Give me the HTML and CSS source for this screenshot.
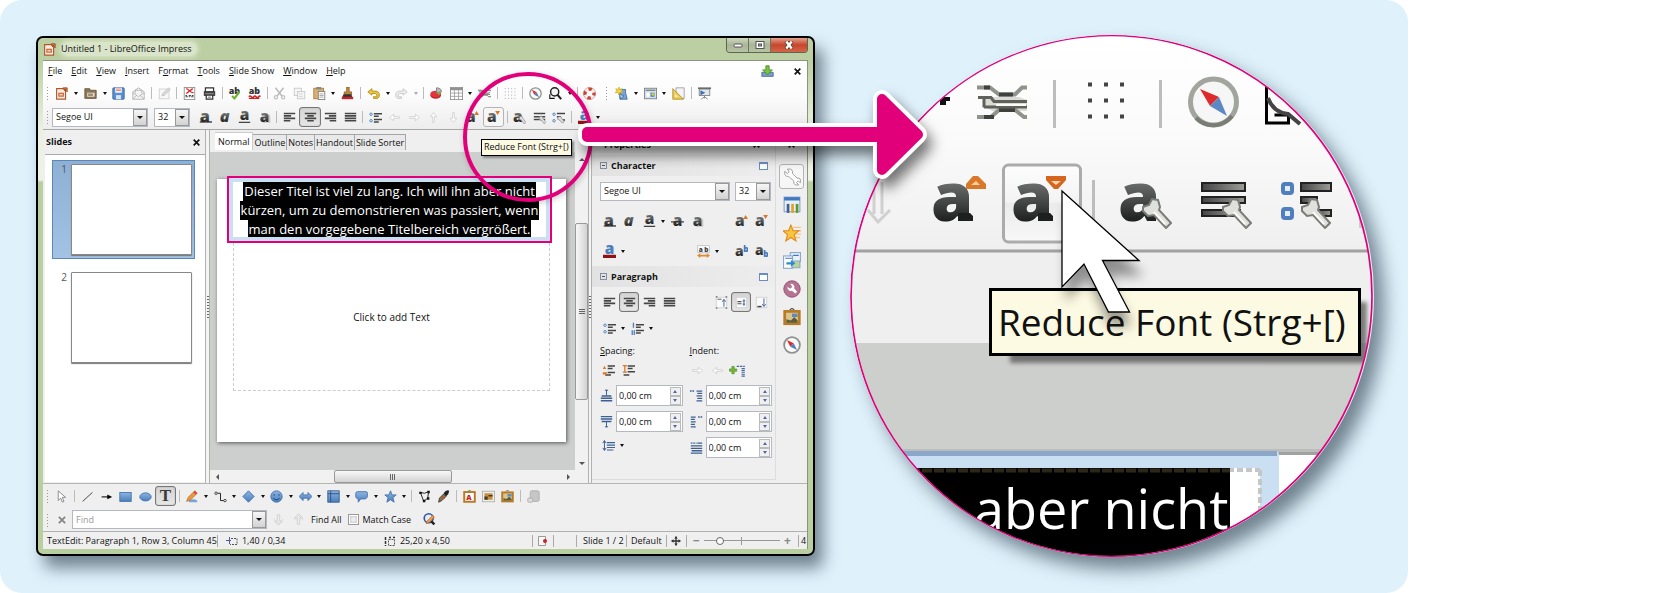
FILE: index.html
```html
<!DOCTYPE html>
<html lang="en">
<head>
<meta charset="utf-8">
<title>LibreOffice Impress: Reduce Font</title>
<link rel="stylesheet" href="styles.css">
</head>
<body>
<svg class="defs" aria-hidden="true">
<defs>
<linearGradient id="gA" x1="0" y1="0" x2="0" y2="1"><stop offset=".2" stop-color="#8a8d8a"/><stop offset=".8" stop-color="#1c1e1e"/></linearGradient>
<linearGradient id="gB" x1="0" y1="0" x2="0" y2="1"><stop offset="0" stop-color="#8db4e2"/><stop offset="1" stop-color="#4a7ebb"/></linearGradient>
<linearGradient id="gBar" x1="0" y1="0" x2="1" y2="0"><stop offset="0" stop-color="#444"/><stop offset="1" stop-color="#9b9d97"/></linearGradient>
</defs>
<symbol id="doc" viewBox="0 0 16 16"><path d="M2 2h8l3 3v10H2z" fill="#fbeee6" stroke="#b1572c" stroke-width="1.4"/><rect x="4" y="7" width="7" height="5" fill="#c96c3c"/><path d="M5.500 8.500h4v2h-4z" fill="#f4d0b8"/><path d="M10 1h5v5zM11 5l3-3" fill="#d07a48" stroke="#a04a20"/></symbol>
<symbol id="folder" viewBox="0 0 16 16"><path d="M1 2h6l1 2h7v10H1z" fill="#8a7458" stroke="#6a563c"/><path d="M4 7h9v5H4z" fill="#e8e2d8"/><path d="M5 8h6v3H5z" fill="#9a8a70"/></symbol>
<symbol id="save" viewBox="0 0 16 16"><rect x="1" y="1" width="14" height="14" rx="1" fill="#5a8fd0" stroke="#2f5f9f"/><path d="M4 1h8v6H4z" fill="#fff"/><path d="M5 2.500h6M5 4.500h6" stroke="#d45a4a"/><path d="M5 10h6v5H5z" fill="#dce6f2"/></symbol>
<symbol id="mail" viewBox="0 0 16 16"><path d="M1 6l7-5 7 5v9H1z" fill="#f4f4f4" stroke="#aaa"/><path d="M1 7l7 5 7-5M1 15l5-5M15 15l-5-5M4 8V4h8v4" fill="none" stroke="#b0b0b0"/></symbol>
<symbol id="edit" viewBox="0 0 16 16"><rect x="1.500" y="2.500" width="12" height="12" fill="#f8f8f8" stroke="#ccc"/><path d="M5 11l1-3 7-7 2 2-7 7z" fill="#ddd" stroke="#bbb"/></symbol>
<symbol id="pdf" viewBox="0 0 16 16"><rect x="1.500" y=".5" width="13" height="15" fill="#fff" stroke="#888"/><path d="M4 2c4 1 4 5 9 5M12 2L4 8" fill="none" stroke="#d22" stroke-width="1.600"/><path d="M3 12h3M7 12h2M10 12h3M3 10.500h2M7 10.500h3M11 10.500h2" fill="none" stroke="#444" stroke-width="1.200"/></symbol>
<symbol id="print" viewBox="0 0 16 16"><path d="M3 1h10v5H3z" fill="#fff" stroke="#333" stroke-width="1.500"/><path d="M1 5h14v6H1z" fill="#444"/><path d="M3 8.500h10" stroke="#ccc"/><path d="M4 10h8v5H4z" fill="#fff" stroke="#333" stroke-width="1.500"/><path d="M6 12.500h4" stroke="#555"/></symbol>
<symbol id="cut" viewBox="0 0 16 16"><path d="M3 1l8 10M13 1L5 11" stroke="#b8b8b8" stroke-width="1.800"/><g fill="none" stroke="#c0c0c0" stroke-width="1.500"><circle cx="3.500" cy="12.500" r="2"/><circle cx="12.500" cy="12.500" r="2"/></g></symbol>
<symbol id="copy" viewBox="0 0 16 16"><g fill="#f6f6f6" stroke="#c4c4c4"><rect x="1.500" y="1.500" width="9" height="9"/><rect x="5.500" y="5.500" width="9" height="9"/></g><path d="M7 8.500h5M7 11.500h5" stroke="#ccc"/></symbol>
<symbol id="paste" viewBox="0 0 16 16"><rect x="1" y="1.500" width="12" height="13" fill="#d9b072" stroke="#a87832"/><rect x="4" y="0" width="6" height="3" fill="#888"/><rect x="6.500" y="5.500" width="8" height="10" fill="#fff" stroke="#777"/><path d="M8 8.500h5M8 10.500h5M8 12.500h5" stroke="#999"/></symbol>
<symbol id="brush" viewBox="0 0 16 16"><path d="M7 0h3v6h3v3H4V6h3z" fill="#c88a3c" stroke="#8a5a20"/><path d="M3 9h10l1 5H1z" fill="#333"/><path d="M1 12h14v3H1z" fill="#c9222c"/></symbol>
<symbol id="undo" viewBox="0 0 16 16"><path d="M6 2L1 6l5 4V8h4q3 0 2 4H8v2h5q3-1 2-6-1-3-5-3H6z" fill="#f0c93c" stroke="#a98410"/></symbol>
<symbol id="redo" viewBox="0 0 16 16"><path d="M10 2l5 4-5 4V8H6q-3 0-2 4h4v2H3Q0 13 1 8q1-3 5-3h4z" fill="#eee" stroke="#c4c4c4"/></symbol>
<symbol id="chart" viewBox="0 0 16 16"><ellipse cx="7" cy="10" rx="6.500" ry="4.500" fill="#c8202a"/><ellipse cx="7" cy="8.500" rx="6.500" ry="4" fill="#e2353c"/><path d="M8 7V1q6 0 6 5z" fill="#bbb" stroke="#777"/><path d="M8 7l6-1-3 4z" fill="#7db53c"/></symbol>
<symbol id="table" viewBox="0 0 16 16"><rect x=".5" y=".5" width="15" height="15" fill="#fff" stroke="#888"/><path d="M0 1h16v3H0z" fill="#8f928f"/><path d="M0 7.500h16M0 11.500h16M5.500 4v12M10.500 4v12" stroke="#999"/></symbol>
<symbol id="zig" viewBox="0 0 16 10"><path d="M0 1h5l2 2h3l2-2h4M0 9h5l2-2h4l2 2h3M1 3h5v3h9M2 5v3M6 4.500h7l2-1.500" fill="none" stroke="#6c706c" stroke-width="1.200"/></symbol>
<symbol id="grid" viewBox="0 0 16 16"><path d="M1 2h14M1 6h14M1 10h14M1 14h14" stroke="#8a8a8a" stroke-width="1" stroke-dasharray="1 3"/></symbol>
<symbol id="compass" viewBox="0 0 16 16"><circle cx="8" cy="8" r="7" fill="#fafafa" stroke="#8e918c" stroke-width="1.600"/><path d="M3.500 3.500l6 3-3 3z" fill="#dc2a2a"/><path d="M12.500 12.500l-6-3 3-3z" fill="#5580bd"/></symbol>
<symbol id="find" viewBox="0 0 16 16"><path d="M1 9V14h6" fill="none" stroke="#111" stroke-width="1.300"/><circle cx="7" cy="6" r="5" fill="#f4f4f4" stroke="#222" stroke-width="1.800"/><path d="M10 9l5 6" stroke="#222" stroke-width="2.600"/></symbol>
<symbol id="buoy" viewBox="0 0 16 16"><circle cx="8" cy="8" r="5.500" fill="none" stroke="#eee" stroke-width="4"/><circle cx="8" cy="8" r="5.500" fill="none" stroke="#d6402e" stroke-width="4" stroke-dasharray="4.300 4.340" stroke-dashoffset="2"/><circle cx="8" cy="8" r="7.500" fill="none" stroke="#b66" stroke-width=".6"/></symbol>
<symbol id="newslide" viewBox="0 0 16 16"><path d="M6 3h7v4l2 8H6z" fill="#7ba4d6" stroke="#39669c"/><path d="M5 8l6 3-4 4z" fill="#a9c8ea" stroke="#39669c"/><path d="M5 0l1 3 3-1-1 3 2 2-4 0-1 3-1-3-4 0 2-2-1-3 3 1z" fill="#f6d33c" stroke="#b8920c" stroke-width=".6"/></symbol>
<symbol id="layout" viewBox="0 0 16 16"><rect x=".5" y="1.500" width="15" height="13" fill="#cfe0f2" stroke="#777"/><path d="M2 4h12" stroke="#777" stroke-width="1.500"/><path d="M3 7h4v5H3z" fill="#fff"/><path d="M8 7h5v5H8z" fill="#4a7ebb"/><circle cx="11" cy="9" r="2" fill="#c8c83c"/></symbol>
<symbol id="ruler" viewBox="0 0 16 16"><path d="M5 1h10v13H5z" fill="#f4f4f4" stroke="#999"/><path d="M1 2v13h13z" fill="#f1cf57" stroke="#a98420"/><path d="M4 9v3h3z" fill="#fff"/></symbol>
<symbol id="present" viewBox="0 0 16 16"><path d="M0 1.500h16" stroke="#666" stroke-width="2"/><rect x="1.500" y="2.500" width="13" height="8" fill="#dfe6ec" stroke="#777"/><path d="M3 4l6 3-6 3z" fill="#3f6fb0"/><path d="M8 11v3M4 15l4-3 4 3" fill="none" stroke="#777"/></symbol>
<symbol id="a-wr" viewBox="0 0 16 16"><path d="M8 7q4-2 4 2l4 5-2 2-4-5q-3 0-2-2z" fill="#ddd" stroke="#888" stroke-width=".8"/></symbol>
<symbol id="al-l" viewBox="0 0 16 16"><path d="M1 3h14M1 6h9M1 9h14M1 12h8" stroke="#444744" stroke-width="2"/></symbol>
<symbol id="al-c" viewBox="0 0 16 16"><path d="M1 3h14M4 6h8M1 9h14M4 12h8" stroke="#444744" stroke-width="2"/></symbol>
<symbol id="al-r" viewBox="0 0 16 16"><path d="M1 3h14M6 6h9M1 9h14M7 12h8" stroke="#444744" stroke-width="2"/></symbol>
<symbol id="al-j" viewBox="0 0 16 16"><path d="M1 3h14M1 6h14M1 9h14M1 12h14" stroke="#444744" stroke-width="2"/></symbol>
<symbol id="bul" viewBox="0 0 16 16"><g fill="#fff" stroke="#4a7ebb" stroke-width="1.200"><circle cx="2.500" cy="4" r="1.500"/><circle cx="2.500" cy="12" r="1.500"/></g><path d="M6 3.500h10M6 6.500h6M6 10.500h10M6 13.500h6" stroke="#444744" stroke-width="1.800"/></symbol>
<symbol id="num" viewBox="0 0 16 16"><path d="M3 1v6M1.500 10v6M4 10v6" stroke="#4a7ebb" stroke-width="1.600"/><path d="M6 3.500h10M6 6.500h6M6 10.500h10M6 13.500h6" stroke="#444744" stroke-width="1.800"/></symbol>
<symbol id="ar-l" viewBox="0 0 16 16"><path d="M2 8l5-4v3h7v2H7v3z" fill="#fff" stroke="#ccc"/></symbol>
<symbol id="ar-r" viewBox="0 0 16 16"><path d="M14 8L9 4v3H2v2h7v3z" fill="#fff" stroke="#ccc"/></symbol>
<symbol id="ar-u" viewBox="0 0 16 16"><path d="M8 2L4 7h3v7h2V7h3z" fill="#fff" stroke="#ccc"/></symbol>
<symbol id="ar-d" viewBox="0 0 16 16"><path d="M8 14l4-5H9V2H7v7H4z" fill="#fff" stroke="#ccc"/></symbol>
<symbol id="ln-w" viewBox="0 0 16 16"><path d="M1 3h14M1 7h14M1 10.500h14" stroke="#444744" stroke-width="2"/><path d="M8 7q4-2 4 2l4 5-2 2-4-5q-3 0-2-2z" fill="#ddd" stroke="#888" stroke-width=".8"/></symbol>
<symbol id="bul-w" viewBox="0 0 16 16"><g fill="#fff" stroke="#4a7ebb" stroke-width="1.200"><circle cx="2.500" cy="4" r="1.500"/><circle cx="2.500" cy="12" r="1.500"/></g><path d="M6 3h10M6 7h5M12 11h4" stroke="#444744" stroke-width="2"/><path d="M7 8q4-3 5 1l3 4-2 2-4-4q-3 0-2-3z" fill="#ddd" stroke="#777" stroke-width=".8"/></symbol>
<symbol id="v-t" viewBox="0 0 16 16"><rect x="1.500" y="1.500" width="13" height="13" fill="#fafafa" stroke="#ccc"/><path d="M1 1h2M13 1h2M1 15h2M13 15h2M3 4h5" stroke="#666" stroke-width="1.400"/><path d="M11 13V5M9 7l2-3 2 3" fill="none" stroke="#46659a" stroke-width="1.200"/></symbol>
<symbol id="v-m" viewBox="0 0 16 16"><rect x="1.500" y="1.500" width="13" height="13" fill="#fafafa" stroke="#ccc"/><path d="M3 7h5M3 9.500h5" stroke="#555" stroke-width="1.400"/><path d="M11 4v8M9.500 6h3M9.500 10h3" fill="none" stroke="#46659a" stroke-width="1.200"/></symbol>
<symbol id="v-b" viewBox="0 0 16 16"><rect x="1.500" y="1.500" width="13" height="13" fill="#fafafa" stroke="#ccc"/><path d="M3 13h5" stroke="#444" stroke-width="1.800"/><path d="M11 3v9M9 10l2 3 2-3" fill="none" stroke="#46659a" stroke-width="1.200"/></symbol>
<symbol id="sp-i" viewBox="0 0 16 16"><path d="M7 2.500h9M7 5.500h6M7 10.500h9M4 13.500h7" stroke="#444" stroke-width="1.800"/><path d="M1 6l2-4 2 4zM1 10h5v3H1z" fill="#dd7722"/></symbol>
<symbol id="sp-d" viewBox="0 0 16 16"><path d="M7 2.500h9M7 5.500h6M7 9.500h9M2 13.500h7" stroke="#444" stroke-width="1.800"/><path d="M1 2h5M3.500 2v8M1 10h5" stroke="#dd7722" stroke-width="1.600"/></symbol>
<symbol id="in-h" viewBox="0 0 20 16"><path d="M0 6h3V3h3v3h3v3H6v3H3V9H0z" fill="#73b53c" stroke="#4c8a1c" stroke-width=".7"/><path d="M9 3h10" stroke="#46659a" stroke-width="1.400" stroke-dasharray="3 1"/><path d="M17 5v11" stroke="#46659a" stroke-width="4" stroke-dasharray="1.500 1"/></symbol>
<symbol id="f-top" viewBox="0 0 16 16"><path d="M8 1v7M6 1.500h4" stroke="#3d5f94" stroke-width="1.200"/><path d="M2 8.500h12M1 11.500h14M1 14.500h14" stroke="#3d5f94" stroke-width="1.800"/></symbol>
<symbol id="f-bot" viewBox="0 0 16 16"><path d="M8 8v7M6 14.500h4" stroke="#3d5f94" stroke-width="1.200"/><path d="M1 2h14M1 5h14M2 8h12" stroke="#3d5f94" stroke-width="1.800"/></symbol>
<symbol id="f-l" viewBox="0 0 16 16"><path d="M0 2.500h6" stroke="#3d5f94" stroke-width="1.800" stroke-dasharray="2 1"/><path d="M8 2.500h7M9 5.500h6M8 8.500h7M9 11.500h6M8 14.500h7" stroke="#3d5f94" stroke-width="1.600"/></symbol>
<symbol id="f-r" viewBox="0 0 16 16"><path d="M10 2.500h6" stroke="#3d5f94" stroke-width="1.800" stroke-dasharray="2 1"/><path d="M1 2.500h6M1 5.500h5M1 8.500h6M1 11.500h5M1 14.500h6" stroke="#3d5f94" stroke-width="1.600"/></symbol>
<symbol id="f-f" viewBox="0 0 16 16"><path d="M1 2.500h7" stroke="#3d5f94" stroke-width="1.600" stroke-dasharray="2 1"/><path d="M9 2.500h6M1 6h14M1 9h14M2 12h13M1 15h14" stroke="#3d5f94" stroke-width="1.600"/></symbol>
<symbol id="f-ls" viewBox="0 0 16 16"><path d="M3 2v12M1 5l2-3 2 3M1 11l2 3 2-3" fill="none" stroke="#3d5f94" stroke-width="1.200"/><path d="M6 4.500h10M6 7.500h10M6 10.500h10M6 13.500h8" stroke="#3d5f94" stroke-width="1.400"/></symbol>
<symbol id="sel" viewBox="0 0 16 16"><path d="M4 1v12l3-3 2 5 2-1-2-5h4z" fill="#fff" stroke="#777"/></symbol>
<symbol id="line" viewBox="0 0 16 16"><path d="M2 14L14 3" stroke="#222"/></symbol>
<symbol id="arw" viewBox="0 0 16 16"><path d="M2 8.500h8" stroke="#111" stroke-width="1.400"/><path d="M9 5.500l6 3-6 3z"/></symbol>
<symbol id="rect" viewBox="0 0 16 16"><rect x="1" y="3" width="14" height="11" fill="url(#gB)" stroke="#3d6ca8"/></symbol>
<symbol id="ell" viewBox="0 0 16 16"><ellipse cx="8" cy="8.500" rx="7" ry="5" fill="url(#gB)" stroke="#3d6ca8"/></symbol>
<symbol id="pencil" viewBox="0 0 16 16"><path d="M5 13q5-3 10 0v2H5z" fill="#7ba4d6"/><path d="M2 14l2-5 8-8 3 3-8 8z" fill="#ee9a3c" stroke="#a85c18" stroke-width=".8"/><path d="M12 1l3 3-2 1.500L10.500 3z" fill="#d44"/></symbol>
<symbol id="conn" viewBox="0 0 16 16"><path d="M2 4h6v9h5" fill="none" stroke="#222" stroke-width="1.200"/><g fill="#fff" stroke="#222"><circle cx="2.500" cy="4" r="1.500"/><circle cx="13.500" cy="13" r="1.500"/></g></symbol>
<symbol id="dia" viewBox="0 0 16 16"><path d="M8 1l7 7-7 7-7-7z" fill="url(#gB)" stroke="#3d6ca8"/></symbol>
<symbol id="smile" viewBox="0 0 16 16"><circle cx="8" cy="8" r="7" fill="url(#gB)" stroke="#3d6ca8"/><path d="M5 5v2M11 5v2M4 10q4 4 8 0" fill="none" stroke="#234a7c" stroke-width="1.200"/></symbol>
<symbol id="lr" viewBox="0 0 16 16"><path d="M0 8l5-5v3h6V3l5 5-5 5v-3H5v3z" fill="url(#gB)" stroke="#3d6ca8"/></symbol>
<symbol id="flow" viewBox="0 0 16 16"><rect x="1" y="1" width="14" height="14" fill="url(#gB)" stroke="#2f5588"/><path d="M1 4.500h14M4.500 1v14" stroke="#234a7c"/></symbol>
<symbol id="bub" viewBox="0 0 16 16"><path d="M3 2h11q2 0 1 7-1 2-3 2H7l-3 4v-4Q0 11 1 4q0-2 2-2z" fill="url(#gB)" stroke="#3d6ca8"/></symbol>
<symbol id="star" viewBox="0 0 16 16"><path d="M8 1l2 5h5l-4 3.500L12.500 15 8 12l-4.500 3L5 9.500 1 6h5z" fill="url(#gB)" stroke="#3d6ca8"/></symbol>
<symbol id="poly" viewBox="0 0 16 16"><path d="M3 3l5 1 5-2-1 8-5 4z" fill="none" stroke="#222" stroke-width="1.200"/><g fill="#111"><path d="M1.500 2h3v3h-3zM11.500 1h3v3h-3zM11 9h3v3h-3zM6 12h3v3H6z"/></g></symbol>
<symbol id="drop" viewBox="0 0 16 16"><path d="M2 15l1-5 5-5 3 3-5 5z" fill="#8a7440" stroke="#333"/><path d="M8 4q4-5 7-3-0 4-4 7z" fill="#222"/><path d="M6 8l3 3" stroke="#d2452a" stroke-width="1.500"/></symbol>
<symbol id="fw" viewBox="0 0 16 16"><path d="M6 2l2-2 2 2" fill="none" stroke="#555"/><rect x="1.500" y="2.500" width="13" height="12" fill="#fff" stroke="#b97a24" stroke-width="2.400"/></symbol>
<symbol id="pic" viewBox="0 0 16 16"><rect x=".5" y="1.500" width="15" height="13" fill="#eee" stroke="#aaa"/><path d="M3 4h10v8H3z" fill="#c89038"/><path d="M3 8h4v4H3zM8 6h5v2H8z" fill="#443c2c"/></symbol>
<symbol id="gal" viewBox="0 0 16 16"><path d="M6 2l2-2 2 2" fill="none" stroke="#555"/><rect x="1.500" y="3" width="13" height="11" fill="#d8c48c" stroke="#b97a24" stroke-width="2.400"/><path d="M3 10l4 1 3-3 3 3v2H3z" fill="#5c5c3c"/><path d="M8 5h5v3H8z" fill="#5d8ac0"/></symbol>
<symbol id="extr" viewBox="0 0 16 16"><rect x="4" y="1" width="11" height="13" rx="2" fill="#c6c6c6" stroke="#aaa"/><rect x="1" y="10" width="6" height="5" rx="1" fill="#ddd" stroke="#aaa"/></symbol>
<symbol id="x" viewBox="0 0 16 16"><path d="M3 3l10 10M13 3L3 13" stroke="currentColor" stroke-width="3"/></symbol>
<symbol id="f-dn" viewBox="0 0 16 16"><path d="M8 15l5-5H9.500V2h-3v8H3z" fill="#eee" stroke="#ccc"/><path d="M2 7l6 6 6-6" fill="none" stroke="#d4d4d4"/></symbol>
<symbol id="f-up" viewBox="0 0 16 16"><path d="M8 1L3 6h3.500v8h3V6H13z" fill="#eee" stroke="#ccc"/><path d="M2 9l6-6 6 6" fill="none" stroke="#d4d4d4"/></symbol>
<symbol id="f-rep" viewBox="0 0 16 16"><circle cx="7" cy="6.500" r="5.500" fill="#e4ecf6" stroke="#34569a" stroke-width="2"/><path d="M10 10l4 4" stroke="#222" stroke-width="3"/><path d="M4 13l1-3 7-7 2 2-7 7z" fill="#f0a040" stroke="#b8501c" stroke-width=".8"/></symbol>
<symbol id="dl" viewBox="0 0 16 16"><path d="M1 9h14v5H1z" fill="#7d9cc4" stroke="#46659a"/><path d="M6 1h4v5h4l-6 6-6-6h4z" fill="#7cc243" stroke="#3c8a1c"/></symbol>
<symbol id="wrench" viewBox="0 0 16 16"><path d="M1.500 3l2.500 2 1.500-1.500L4 1q5-1 4.500 4l4 4q4-.5 3 4l-2-1.500-1.500 1.500L14 15q-5 1-4.500-3.500l-4.500-4Q1 8 1.500 3z" fill="#fcfcfc" stroke="#999" stroke-width=".8"/></symbol>
<symbol id="s-styles" viewBox="0 0 16 16"><rect x="1" y="1" width="14" height="13" fill="#e6effa" stroke="#8ba6c8"/><path d="M1 1h14v3H1z" fill="#3f78c4"/><path d="M4.500 7v8" stroke="#3f5f9a" stroke-width="2.400"/><path d="M8.500 7v8" stroke="#e6a020" stroke-width="2.400"/><path d="M12.500 7v8" stroke="#5a9a2c" stroke-width="2.400"/></symbol>
<symbol id="s-anim" viewBox="0 0 16 16"><path d="M9 3h7M11 6h5M11 9h5M10 12h5" stroke="#f2c584" stroke-width="1.200"/><path d="M7 1l2 5h5l-4 3.500L11.500 15 7 12l-4.500 3L4 9.500 0 6h5z" fill="#f9c53c" stroke="#e08a1c"/></symbol>
<symbol id="s-trans" viewBox="0 0 16 16"><rect x="6.500" y=".5" width="9" height="8" fill="#e9f1fa" stroke="#88a8cc"/><rect x=".5" y="3.500" width="8" height="11" fill="#fff" stroke="#88a8cc"/><path d="M8 8h7v6H8z" fill="#b9d49a" stroke="#88a8cc"/><path d="M2 5.500h6M9 3h5" stroke="#3f78c4"/><path d="M3 9h4V7l4 3-4 3v-2H3z" fill="#2f8ad0"/></symbol>
<symbol id="s-master" viewBox="0 0 16 16"><circle cx="8" cy="8" r="7.300" fill="#b57592" stroke="#8f5070" stroke-width=".8"/><path d="M6.500 3.500a3 3 0 0 1 3.500 4l2.500 3-1.500 1.500-3-2.500a3 3 0 0 1-4-3.500l2 1.500 1.500-.5.500-1.500z" fill="#fff"/></symbol>
</svg>

<main class="board">
<section class="window" aria-label="LibreOffice Impress">
 <header class="titlebar">
  <svg class="ic"><use href="#doc"/></svg>
  <h1>Untitled 1 - LibreOffice Impress</h1>
  <div class="winbtns">
   <button aria-label="Minimize"><svg viewBox="0 0 12 8"><rect x="2" y="3" width="8" height="3" rx="1" fill="#fff" stroke="#555"/></svg></button>
   <button aria-label="Maximize"><svg viewBox="0 0 12 8"><rect x="2" y=".5" width="8" height="7" fill="#fff" stroke="#555"/><rect x="4.500" y="3" width="3" height="2" fill="#aaa" stroke="#555"/></svg></button>
   <button class="close" aria-label="Close"><svg viewBox="0 0 12 8"><path d="M3 0l6 8M9 0L3 8" stroke="#543" stroke-width="4"/><path d="M3.300 .5l5.400 7M8.700 .5l-5.400 7" stroke="#fff" stroke-width="2.400"/></svg></button>
  </div>
 </header>
 <div class="client">
  <div class="top">
  <nav class="menubar">
   <button><u>F</u>ile</button><button><u>E</u>dit</button><button><u>V</u>iew</button><button><u>I</u>nsert</button><button>F<u>o</u>rmat</button><button><u>T</u>ools</button><button><u>S</u>lide Show</button><button><u>W</u>indow</button><button><u>H</u>elp</button>
   <span class="grow"></span>
   <button aria-label="Download update"><svg class="ic"><use href="#dl"/></svg></button>
   <button class="docclose" aria-label="Close document"><svg class="ic-s"><use href="#x"/></svg></button>
  </nav>
  <div class="toolbar tb-std">
   <i class="grip"></i>
   <button class="t" aria-label="New"><svg><use href="#doc"/></svg></button><button class="c" aria-label="New options"></button>
   <button class="t" aria-label="Open"><svg><use href="#folder"/></svg></button><button class="c" aria-label="Open options"></button>
   <button class="t" aria-label="Save"><svg><use href="#save"/></svg></button>
   <button class="t" aria-label="E-mail"><svg><use href="#mail"/></svg></button><i class="s"></i>
   <button class="t" aria-label="Edit file"><svg><use href="#edit"/></svg></button><i class="s"></i>
   <button class="t" aria-label="Export PDF"><svg><use href="#pdf"/></svg></button>
   <button class="t" aria-label="Print"><svg><use href="#print"/></svg></button><i class="s"></i>
   <button class="t" aria-label="Spelling"><svg viewBox="0 0 16 16"><text x="1" y="9" class="g-a" font-size="11" fill="#333">ab</text><path d="M5 11l3 3 6-8" fill="none" stroke="#6fb52c" stroke-width="2.600"/></svg></button>
   <button class="t" aria-label="Auto spellcheck"><svg viewBox="0 0 16 16"><text x="1" y="9" class="g-a" font-size="11" fill="#333">ab</text><path d="M1 12q1.500-2 3 0t3 0 3 0 3 0 2 0M1 14h13" fill="none" stroke="#c22" stroke-width="1.800"/></svg></button><i class="s"></i>
   <button class="t" aria-label="Cut"><svg><use href="#cut"/></svg></button>
   <button class="t" aria-label="Copy"><svg><use href="#copy"/></svg></button>
   <button class="t" aria-label="Paste"><svg><use href="#paste"/></svg></button><button class="c" aria-label="Paste options"></button>
   <button class="t" aria-label="Clone formatting"><svg><use href="#brush"/></svg></button><i class="s"></i>
   <button class="t" aria-label="Undo"><svg><use href="#undo"/></svg></button><button class="c" aria-label="Undo list"></button>
   <button class="t" aria-label="Redo"><svg><use href="#redo"/></svg></button><button class="c dim" aria-label="Redo list"></button><i class="s"></i>
   <button class="t" aria-label="Chart"><svg><use href="#chart"/></svg></button>
   <button class="t" aria-label="Table"><svg><use href="#table"/></svg></button><button class="c" aria-label="Table options"></button>
   <button class="t" aria-label="Hyperlink"><svg><use href="#zig"/></svg></button><i class="s"></i>
   <button class="t" aria-label="Grid"><svg><use href="#grid"/></svg></button><i class="s"></i>
   <button class="t" aria-label="Navigator"><svg><use href="#compass"/></svg></button>
   <button class="t" aria-label="Zoom"><svg><use href="#find"/></svg></button><button class="c" aria-label="Zoom options"></button><i class="s"></i>
   <button class="t" aria-label="Help"><svg><use href="#buoy"/></svg></button><i class="grip mid"></i>
   <button class="t" aria-label="New slide"><svg><use href="#newslide"/></svg></button><button class="c" aria-label="New slide options"></button>
   <button class="t" aria-label="Layout"><svg><use href="#layout"/></svg></button><button class="c" aria-label="Layout options"></button>
   <button class="t" aria-label="Slide design"><svg><use href="#ruler"/></svg></button><i class="s"></i>
   <button class="t" aria-label="Slide show"><svg><use href="#present"/></svg></button>
  </div>
  <div class="toolbar tb-fmt">
   <i class="grip"></i>
   <label class="combo font"><select aria-label="Font name"><option>Segoe UI</option></select><span class="dd"></span></label>
   <label class="combo size"><select aria-label="Font size"><option>32</option></select><span class="dd"></span></label>
   <button class="t" aria-label="Bold"><svg viewBox="0 0 16 16"><text x="1" y="14" class="g-a" font-size="20" fill="url(#gA)">a</text><path d="M1 13.500h15" stroke="#222" stroke-width="1.500"/></svg></button>
   <button class="t" aria-label="Italic"><svg viewBox="0 0 16 16"><text x="1" y="14" class="g-a" font-style="italic" font-size="20" fill="url(#gA)">a</text></svg></button>
   <button class="t" aria-label="Underline"><svg viewBox="0 0 16 16"><text x="2" y="11" class="g-a" font-size="19" fill="url(#gA)">a</text><path d="M1 14h14" stroke="#444" stroke-width="1.600"/></svg></button>
   <button class="t" aria-label="Shadow"><svg viewBox="0 0 16 16"><text x="2" y="14" class="g-a sh" font-size="19" fill="url(#gA)">a</text></svg></button><i class="s"></i>
   <button class="t" aria-label="Align left"><svg><use href="#al-l"/></svg></button>
   <button class="t on" aria-label="Centered"><svg><use href="#al-c"/></svg></button>
   <button class="t" aria-label="Align right"><svg><use href="#al-r"/></svg></button>
   <button class="t" aria-label="Justified"><svg><use href="#al-j"/></svg></button><i class="s"></i>
   <button class="t" aria-label="Bullets"><svg><use href="#bul"/></svg></button>
   <button class="t" aria-label="Promote"><svg><use href="#ar-l"/></svg></button>
   <button class="t" aria-label="Demote"><svg><use href="#ar-r"/></svg></button>
   <button class="t" aria-label="Move up"><svg><use href="#ar-u"/></svg></button>
   <button class="t" aria-label="Move down"><svg><use href="#ar-d"/></svg></button>
   <button class="t" aria-label="Increase font"><svg viewBox="0 0 16 16"><text x="0" y="14" class="g-a" font-size="19" fill="url(#gA)">a</text><path d="M10 5l3-5 3 5z" fill="#dd7722"/></svg></button>
   <button class="t hot" aria-label="Reduce font"><svg viewBox="0 0 16 16"><text x="0" y="14" class="g-a" font-size="19" fill="url(#gA)">a</text><path d="M10 0l3 5 3-5z" fill="#dd7722"/></svg></button><i class="s"></i>
   <button class="t" aria-label="Character"><svg viewBox="0 0 16 16"><text x="0" y="13" class="g-a" font-size="19" fill="url(#gA)">a</text><use href="#a-wr"/></svg></button>
   <button class="t" aria-label="Paragraph"><svg><use href="#ln-w"/></svg></button>
   <button class="t" aria-label="Bullets and numbering"><svg><use href="#bul-w"/></svg></button><i class="s"></i>
   <button class="t" aria-label="Font color"><svg viewBox="0 0 16 16"><text x="2" y="11" class="g-a" font-size="19" fill="#4a7ebb">a</text><path d="M0 12h16v4H0z" fill="#901218"/></svg></button><button class="c" aria-label="Font color options"></button>
  </div>
  </div>

  <div class="work">
   <aside class="slides">
    <div class="panel-head"><h2>Slides</h2><button aria-label="Close pane"><svg class="ic-s"><use href="#x"/></svg></button></div>
    <ol class="thumbs">
     <li class="sel"><span>1</span><div></div></li>
     <li><span>2</span><div></div></li>
    </ol>
   </aside>
   <div class="split"><i></i></div>
   <section class="editor">
    <div class="tabs">
     <button class="cur">Normal</button><button>Outline</button><button>Notes</button><button>Handout</button><button>Slide Sorter</button>
    </div>
    <div class="canvas">
     <div class="slide">
      <div class="title"><p><span>Dieser Titel ist viel zu lang. Ich will ihn aber nicht</span><span>kürzen, um zu demonstrieren was passiert, wenn</span><span>man den vorgegebene Titelbereich vergrößert.</span></p></div>
      <div class="outline">Click to add Text</div>
     </div>
    </div>
    <div class="vs"><i class="up"></i><i class="v1"></i><i class="thumb"></i><i class="v2"></i><i class="down"></i></div>
    <div class="hs"><i class="left"></i><i class="h1"></i><i class="thumb"></i><i class="h2"></i><i class="right"></i></div>
   </section>
   <div class="split"><i></i></div>
   <aside class="sidebar">
    <div class="props">
     <div class="panel-head"><h2>Properties</h2><button aria-label="Close sidebar"><svg class="ic-s"><use href="#x"/></svg></button></div>
     <div class="sec"><i class="minus"></i><h3>Character</h3><i class="more"></i></div>
     <div class="prow fonts">
      <label class="combo font"><select aria-label="Font name"><option>Segoe UI</option></select><span class="dd"></span></label>
      <label class="combo size"><select aria-label="Font size"><option>32</option></select><span class="dd"></span></label>
     </div>
     <div class="prow tools">
      <button class="t" aria-label="Bold"><svg viewBox="0 0 16 16"><text x="1" y="14" class="g-a" font-size="20" fill="url(#gA)">a</text><path d="M1 13.500h15" stroke="#222" stroke-width="1.500"/></svg></button>
      <button class="t" aria-label="Italic"><svg viewBox="0 0 16 16"><text x="1" y="14" class="g-a" font-style="italic" font-size="20" fill="url(#gA)">a</text></svg></button>
      <button class="t" aria-label="Underline"><svg viewBox="0 0 16 16"><text x="2" y="11" class="g-a" font-size="19" fill="url(#gA)">a</text><path d="M1 14h14" stroke="#444" stroke-width="1.600"/></svg></button><button class="c" aria-label="Underline options"></button>
      <button class="t" aria-label="Strikethrough"><svg viewBox="0 0 16 16"><text x="2" y="13" class="g-a" font-size="19" fill="url(#gA)">a</text><path d="M0 8.500h16" stroke="#333" stroke-width="1.400"/></svg></button>
      <button class="t" aria-label="Shadow"><svg viewBox="0 0 16 16"><text x="2" y="14" class="g-a sh" font-size="19" fill="url(#gA)">a</text></svg></button><span class="grow"></span>
      <button class="t" aria-label="Increase font"><svg viewBox="0 0 16 16"><text x="0" y="14" class="g-a" font-size="19" fill="url(#gA)">a</text><path d="M10 5l3-5 3 5z" fill="#dd7722"/></svg></button>
      <button class="t" aria-label="Reduce font"><svg viewBox="0 0 16 16"><text x="0" y="14" class="g-a" font-size="19" fill="url(#gA)">a</text><path d="M10 0l3 5 3-5z" fill="#dd7722"/></svg></button>
     </div>
     <div class="prow tools">
      <button class="t" aria-label="Font color"><svg viewBox="0 0 16 16"><text x="2" y="11" class="g-a" font-size="19" fill="#4a7ebb">a</text><path d="M0 12h16v4H0z" fill="#901218"/></svg></button><button class="c" aria-label="Font color options"></button><span class="grow"></span>
      <button class="t" aria-label="Character spacing"><svg viewBox="0 0 16 16"><rect x=".5" y=".5" width="15" height="9" rx="1" fill="#fafafa" stroke="#bbb"/><text x="2" y="8" class="g-a" font-size="8" fill="#444">a b</text><path d="M0 13l4-3v2h8v-2l4 3-4 3v-2H4v2z" fill="#e08a34"/></svg></button><button class="c gapr" aria-label="Spacing options"></button>
      <button class="t" aria-label="Superscript"><svg viewBox="0 0 16 16"><text x="0" y="14" class="g-a" font-size="17" fill="url(#gA)">a<tspan x="10" y="9" font-size="10" fill="#3f74b8">b</tspan></text></svg></button>
      <button class="t" aria-label="Subscript"><svg viewBox="0 0 16 16"><text x="0" y="12" class="g-a" font-size="17" fill="url(#gA)">a<tspan x="10" y="15" font-size="10" fill="#3f74b8">b</tspan></text></svg></button>
     </div>
     <div class="sec"><i class="minus"></i><h3>Paragraph</h3><i class="more"></i></div>
     <div class="prow tools">
      <button class="t" aria-label="Align left"><svg><use href="#al-l"/></svg></button>
      <button class="t on" aria-label="Centered"><svg><use href="#al-c"/></svg></button>
      <button class="t" aria-label="Align right"><svg><use href="#al-r"/></svg></button>
      <button class="t" aria-label="Justified"><svg><use href="#al-j"/></svg></button><span class="grow"></span>
      <button class="t" aria-label="Top"><svg><use href="#v-t"/></svg></button>
      <button class="t on" aria-label="Middle"><svg><use href="#v-m"/></svg></button>
      <button class="t" aria-label="Bottom"><svg><use href="#v-b"/></svg></button>
     </div>
     <div class="prow tools short">
      <button class="t" aria-label="Bullets"><svg><use href="#bul"/></svg></button><button class="c" aria-label="Bullet options"></button>
      <button class="t" aria-label="Numbering"><svg><use href="#num"/></svg></button><button class="c" aria-label="Numbering options"></button>
     </div>
     <div class="cols">
      <div class="col">
       <p><u>S</u>pacing:</p>
       <div class="prow short"><button class="t" aria-label="Increase spacing"><svg><use href="#sp-i"/></svg></button><button class="t" aria-label="Decrease spacing"><svg><use href="#sp-d"/></svg></button></div>
       <label class="spin"><svg><use href="#f-top"/></svg><input value="0,00 cm" aria-label="Above paragraph"><span><button aria-label="Up"></button><button class="dn" aria-label="Down"></button></span></label>
       <label class="spin"><svg><use href="#f-bot"/></svg><input value="0,00 cm" aria-label="Below paragraph"><span><button aria-label="Up"></button><button class="dn" aria-label="Down"></button></span></label>
       <div class="prow short"><button class="t" aria-label="Line spacing"><svg><use href="#f-ls"/></svg></button><button class="c" aria-label="Line spacing options"></button></div>
      </div>
      <div class="col">
       <p><u>I</u>ndent:</p>
       <div class="prow short"><button class="t" aria-label="Increase indent"><svg><use href="#ar-r"/></svg></button><button class="t" aria-label="Decrease indent"><svg><use href="#ar-l"/></svg></button><button class="t" aria-label="Hanging indent"><svg class="wide"><use href="#in-h"/></svg></button></div>
       <label class="spin"><svg><use href="#f-l"/></svg><input value="0,00 cm" aria-label="Before text"><span><button aria-label="Up"></button><button class="dn" aria-label="Down"></button></span></label>
       <label class="spin"><svg><use href="#f-r"/></svg><input value="0,00 cm" aria-label="After text"><span><button aria-label="Up"></button><button class="dn" aria-label="Down"></button></span></label>
       <label class="spin"><svg><use href="#f-f"/></svg><input value="0,00 cm" aria-label="First line"><span><button aria-label="Up"></button><button class="dn" aria-label="Down"></button></span></label>
      </div>
     </div>
    </div>
    <nav class="sidetabs">
     <button class="menu" aria-label="Sidebar settings"><svg class="ic-s"><use href="#x"/></svg></button>
     <button class="hot" aria-label="Properties"><svg><use href="#wrench"/></svg></button>
     <button aria-label="Master pages"><svg><use href="#s-styles"/></svg></button>
     <button aria-label="Custom animation"><svg><use href="#s-anim"/></svg></button>
     <button aria-label="Slide transition"><svg><use href="#s-trans"/></svg></button>
     <button aria-label="Styles"><svg><use href="#s-master"/></svg></button>
     <button aria-label="Gallery"><svg><use href="#gal"/></svg></button>
     <button aria-label="Navigator"><svg><use href="#compass"/></svg></button>
    </nav>
   </aside>
  </div>

  <div class="toolbar tb-draw">
   <i class="grip"></i>
   <button class="t" aria-label="Select"><svg><use href="#sel"/></svg></button><i class="s"></i>
   <button class="t" aria-label="Line"><svg><use href="#line"/></svg></button>
   <button class="t" aria-label="Arrow line"><svg><use href="#arw"/></svg></button>
   <button class="t" aria-label="Rectangle"><svg><use href="#rect"/></svg></button>
   <button class="t" aria-label="Ellipse"><svg><use href="#ell"/></svg></button>
   <button class="t on big-t" aria-label="Text">T</button><i class="s"></i>
   <button class="t" aria-label="Curve"><svg><use href="#pencil"/></svg></button><button class="c" aria-label="Curve options"></button>
   <button class="t" aria-label="Connector"><svg><use href="#conn"/></svg></button><button class="c" aria-label="Connector options"></button>
   <button class="t" aria-label="Basic shapes"><svg><use href="#dia"/></svg></button><button class="c" aria-label="Basic shape options"></button>
   <button class="t" aria-label="Symbol shapes"><svg><use href="#smile"/></svg></button><button class="c" aria-label="Symbol shape options"></button>
   <button class="t" aria-label="Block arrows"><svg><use href="#lr"/></svg></button><button class="c" aria-label="Block arrow options"></button>
   <button class="t" aria-label="Flowcharts"><svg><use href="#flow"/></svg></button><button class="c" aria-label="Flowchart options"></button>
   <button class="t" aria-label="Callouts"><svg><use href="#bub"/></svg></button><button class="c" aria-label="Callout options"></button>
   <button class="t" aria-label="Stars"><svg><use href="#star"/></svg></button><button class="c" aria-label="Star options"></button><i class="s"></i>
   <button class="t" aria-label="Points"><svg><use href="#poly"/></svg></button>
   <button class="t" aria-label="Glue points"><svg><use href="#drop"/></svg></button><i class="s"></i>
   <button class="t" aria-label="Fontwork"><svg viewBox="0 0 16 16"><use href="#fw"/><text x="4" y="12" font-size="9" class="g-a" fill="#c8202a">A</text></svg></button>
   <button class="t" aria-label="From file"><svg><use href="#pic"/></svg></button>
   <button class="t" aria-label="Gallery"><svg><use href="#gal"/></svg></button><i class="s"></i>
   <button class="t" aria-label="Extrusion"><svg><use href="#extr"/></svg></button>
  </div>
  <div class="findbar">
   <i class="grip"></i>
   <button class="t gray" aria-label="Close find bar"><svg class="ic-s"><use href="#x"/></svg></button>
   <div class="combo search"><input placeholder="Find" aria-label="Find"><button class="dd" aria-label="Search history"></button></div>
   <button class="t" aria-label="Find next"><svg><use href="#f-dn"/></svg></button>
   <button class="t" aria-label="Find previous"><svg><use href="#f-up"/></svg></button>
   <button class="txt">Find All</button>
   <label class="check"><input type="checkbox">Match Case</label>
   <button class="t" aria-label="Find and replace"><svg><use href="#f-rep"/></svg></button>
  </div>
  <footer class="status">
   <span class="st-a">TextEdit: Paragraph 1, Row 3, Column 45</span>
   <span class="st-b"><svg viewBox="0 0 12 10"><path d="M0 4.500h5M3.500 1v7" stroke="#55a"/><path d="M5 2.500h6v6H4" fill="none" stroke="#555" stroke-dasharray="2 1"/></svg>1,40 / 0,34</span>
   <span class="st-c"><svg viewBox="0 0 12 10"><path d="M1.500 1v9M5 1.500h2M9 1.500h2" stroke="#333" stroke-width="1.500" stroke-dasharray="3 1"/><path d="M4.500 3.500h6v6h-6z" fill="none" stroke="#555" stroke-dasharray="2 1"/></svg>25,20 x 4,50</span>
   <span class="st-d"><svg viewBox="0 0 12 10"><path d="M1.500 .5h7v9h-7z" fill="#f8f8f8" stroke="#999"/><circle cx="8" cy="5" r="2" fill="#c22"/></svg></span>
   <span class="st-e"></span>
   <span class="st-f">Slide 1 / 2</span>
   <span class="st-g">Default</span>
   <span class="st-h"><svg viewBox="0 0 12 12"><path d="M6 1v10M1 6h10" stroke="#333" stroke-width="1.600"/><path d="M6 0l2 3H4zM6 12l2-3H4zM0 6l3-2v4zM12 6L9 4v4z" fill="#333"/></svg></span>
   <span class="st-i"><b>−</b><input type="range" min="0" max="100" value="18" aria-label="Zoom"><b>+</b></span>
   <span class="st-j">4</span>
  </footer>
 </div>
 <div class="ring"></div>
 <div class="tip" role="tooltip">Reduce Font (Strg+[)</div>
</section>

<section class="zoomed" aria-label="Magnified view">
<svg class="lens" viewBox="850 35 524 522">
 <defs>
  <clipPath id="disc"><circle cx="1111.500" cy="296" r="260"/></clipPath>
  <linearGradient id="lbg" x1="0" y1="0" x2="0" y2="1"><stop offset="0" stop-color="#fff"/><stop offset=".5" stop-color="#fafafa"/><stop offset="1" stop-color="#efefef"/></linearGradient>
  <linearGradient id="hb" x1="0" y1="0" x2="0" y2="1"><stop offset="0" stop-color="#fdfdfd"/><stop offset=".48" stop-color="#f3f3f3"/><stop offset=".5" stop-color="#ebebeb"/><stop offset="1" stop-color="#f8f8f8"/></linearGradient>
  <filter id="bl" x="-20%" y="-20%" width="140%" height="140%"><feGaussianBlur stdDeviation="6"/></filter>
  <filter id="bs" x="-20%" y="-20%" width="140%" height="140%"><feGaussianBlur stdDeviation="2"/></filter>
  <symbol id="bw" viewBox="0 0 32 34"><path d="M3 12l6-2 3-6 6 1 2 7-1 3 12 13-5 5-12-13-6 1-5-5z" fill="#e0e0dc" stroke="#7b7d78" stroke-width="2"/><path d="M14 17l11 12" stroke="#fbfbf8" stroke-width="2"/></symbol>
 </defs>
 <g clip-path="url(#disc)">
  <path d="M850 35h524v216H850z" fill="url(#lbg)"/>
  <path d="M850 250h524v93H850z" fill="#efefef"/>
  <path d="M850 249.500h524v3H850z" fill="#a0a2a0"/>
  <path d="M850 343h524v110H850z" fill="#cdcfcd"/>
  <path d="M850 449h524v4H850z" fill="#bbbcbc"/><path d="M850 452h524v4H850z" fill="#a0a2a2"/>
  <path d="M850 455h524v105H850z" fill="#fff"/>
  <path d="M850 451h426q3 0 3 4v110H850z" fill="#cbdff3"/>
  <path d="M850 451h427v5H850z" fill="#8aa6c9"/>
  <path d="M850 468h410v95H850z" fill="#fff"/>
  <path d="M850 470h410M1260 470v90" fill="none" stroke="#c4c6c8" stroke-width="4" stroke-dasharray="6 3"/>
  <path d="M850 468h380v95H850z" fill="#000"/>
  <path d="M850 470.500h380" stroke="#2c2818" stroke-width="4" stroke-dasharray="10 2"/>
  <text x="974" y="529" class="l-text" fill="#fff">aber nicht</text>
  <path d="M940 105v-8h10v4h-4v4z" fill="#111"/>
  <path d="M984 97h35l8 3v11h-34l-9-4z" fill="#d9dbd4"/>
  <g fill="none" stroke-width="4"><path d="M977 87.500h13l9 7h16l7-7h5M977 117h14l8-7h16l9 7h3" stroke="#90938b"/><path d="M984 87.500h6M984 117h10M999 94.500h14M999 110h16" stroke="#3e413e"/><path d="M984 97.500v10M978 97.500h13l3 4h33M984 107h43" stroke="#5f625b" stroke-width="3"/></g>
  <path d="M996 105h30" stroke="#fbfbf6" stroke-width="2"/>
  <path d="M1053 80h3v48h-3zM1159 80h3v48h-3zM1092 180h3v48h-3z" fill="#bdbdbd"/>
  <g stroke="#444" stroke-width="4" stroke-dasharray="4 12"><path d="M1088 84.500h36M1088 100.500h36M1088 116.500h36"/></g>
  <circle cx="1213.500" cy="102" r="23" fill="#f6f6f6" stroke="#a2a59e" stroke-width="5"/><path d="M1196 118a24 24 0 0 0 36-2" fill="none" stroke="#7a7d76" stroke-width="4"/>
  <path d="M1200 89l19 8-9 9z" fill="#dd2a2a"/><path d="M1227 116l-17-10 9-9z" fill="#5d88c4"/>
  <path d="M1266.500 80v43h22v-8h-14" fill="none" stroke="#000" stroke-width="3"/><path d="M1268 98q5 14 20 16l12 10" fill="none" stroke="#444" stroke-width="4"/>
  <path d="M874 182v32M882 182v32M868 210l10 12 12-12" fill="none" stroke="#d0d0d0" stroke-width="3"/>
  <rect x="1003.500" y="165" width="77" height="77" rx="5" fill="url(#hb)" stroke="#ababab" stroke-width="3"/>
  <text x="931" y="221" class="g-a" font-size="68" fill="url(#gA)">a</text>
  <text x="1011" y="221" class="g-a" font-size="68" fill="url(#gA)">a</text>
  <path d="M958 213h12l3 3v5h-15zM1038 213h12l3 3v5h-15z" fill="#1e2020"/>
  <path d="M966 189v-5l7-8h5l8 8v5z" fill="#d9772a"/><path d="M971 185h9l-4-4z" fill="#f9cf9f"/>
  <path d="M1046 176h20v4l-8 9h-4l-8-9z" fill="#d4661f"/><path d="M1051 181h10l-5 4z" fill="#fbd5ab"/>
  <text x="1118" y="221" class="g-a" font-size="68" fill="url(#gA)">a</text>
  <use href="#bw" x="1140" y="195" width="32" height="34"/>
  <g fill="url(#gBar)" stroke="#222" stroke-width="2"><rect x="1202" y="183" width="43" height="8"/><rect x="1202" y="197" width="43" height="6"/><rect x="1202" y="210" width="38" height="6"/><rect x="1301" y="183" width="30" height="8"/><rect x="1301" y="197" width="16" height="6"/><rect x="1316" y="210" width="15" height="6"/></g>
  <use href="#bw" x="1220" y="195" width="32" height="34"/><use href="#bw" x="1299" y="195" width="32" height="34"/>
  <g fill="#e4eefa" stroke="#4f7fbd" stroke-width="4"><rect x="1283" y="184" width="9" height="9" rx="2"/><rect x="1283" y="209" width="9" height="9" rx="2"/></g>
  <path d="M1359 212h3v16h-3z" fill="#ccc"/>
  <path d="M1010 302h357v61h-357z" fill="#555" opacity=".75" filter="url(#bs)"/>
  <path d="M990.500 289.500h369v65h-369z" fill="#fdfae3" stroke="#000" stroke-width="3"/>
  <path d="M1066 206l78 70h-38l26 50h-22l-22-48-22 24z" fill="#000" opacity=".4" filter="url(#bl)"/>
  <text x="998" y="336" class="l-tip">Reduce Font (Strg+[)</text>
  <path d="M1062 191l77 69.500h-36.500l27 51.500h-21L1084 264l-22 23z" fill="#fff" stroke="#000" stroke-width="1.300"/>
 </g>
 <circle cx="1111.500" cy="296" r="260.500" fill="none" stroke="#e2007a" stroke-width="1.700"/>
</svg>
<svg class="arrow" viewBox="570 85 370 110" aria-hidden="true">
 <g class="arrow-shape"><path d="M587 132H882V99L918 134.500 882 170V137H587Z" fill="none" stroke="#fff" stroke-width="18" stroke-linejoin="round"/></g>
 <path d="M587 132H882V99L918 134.500 882 170V137H587Z" fill="#e2007a" stroke="#e2007a" stroke-width="10" stroke-linejoin="round"/>
</svg>
</section>
</main>
</body>
</html>
```
FILE: styles.css
```css
* { box-sizing: border-box; }
body { margin: 0; background: #fff; color: #111; font: 9px/14px "Open Sans", "Noto Sans", sans-serif; }
button, input, select { font: inherit; color: inherit; border: 0; padding: 0; margin: 0; background: none; }
h1, h2, h3, p, ol { margin: 0; padding: 0; font-size: inherit; list-style: none; }
h1 { font-weight: 400; }
button { display: flex; align-items: center; justify-content: center; white-space: nowrap; }
.defs { position: absolute; width: 0; height: 0; }
.g-a { font-family: "Open Sans", sans-serif; font-weight: 800; }
.sh { filter: drop-shadow(2px 1px 0 #bbb); }
.grow { flex: 1; }

.board { display: flex; gap: 35px; align-items: stretch; min-height: 593px; margin-right: 257px; padding: 36px 34px 37px 36px; border-radius: 22px; background: #dff1fb; }

/* application window */
.window { position: relative; flex: 1; min-width: 0; display: flex; flex-direction: column; padding: 0 5px 5px; border: 2px solid #000; border-radius: 7px; background: linear-gradient(#bccfa2 0 24px, #e9f0e0 90px, #eef3e6 142px, #b9cf9f 144px); box-shadow: 8px 12px 16px rgba(40, 60, 75, .6); }
.titlebar { display: flex; align-items: center; gap: 5px; height: 22px; }
.titlebar h1 { padding: 0 5px 0 0; border-radius: 8px; background: rgba(240, 245, 232, .55); box-shadow: 0 0 4px 2px rgba(240, 245, 232, .5); }
.winbtns { display: flex; align-self: flex-start; margin-left: auto; border: 1px solid #5c6650; border-top: 0; border-radius: 0 0 4px 4px; overflow: hidden; }
.winbtns button { width: 22px; height: 14px; border-right: 1px solid #6c765e; background: linear-gradient(#cdd8c0, #a9b596 50%, #b8c4a6); }
.winbtns .close { width: 36px; border-right: 0; background: linear-gradient(#e3a18f, #c8452c 50%, #d4664a); }
.winbtns svg { width: 12px; height: 8px; }
.ic { width: 13px; height: 13px; }
.ic-s { width: 9px; height: 9px; }
.client { flex: 1; display: flex; flex-direction: column; min-width: 0; border: 1px solid #8a9480; border-width: 1px 1px 0 0; background: #efefef; overflow: hidden; }
.top { background: linear-gradient(#fff, #fcfcfc 50%, #ededed); border-bottom: 1px solid #a6a8a6; }
.menubar { display: flex; align-items: center; gap: 9px; height: 20px; padding: 0 4px 0 5px; }
.menubar .docclose { margin-left: 8px; width: 12px; }

/* toolbars: proportional cells for tools, carets and separators */
.toolbar { display: flex; align-items: center; height: 25px; padding-left: 3px; }
.tb-std { height: 24px; padding-right: 93px; }
.tb-fmt { height: 24px; padding-right: 204px; }
.tb-draw { padding-right: 264px; border-top: 1px solid #b4b6b4; }
.grip { flex: none; width: 6px; height: 14px; background: radial-gradient(circle, #999 0 1px, transparent 1px) 0 0 / 3px 3px repeat-y; }
.grip.mid { flex: 24 1 0; width: auto; background-position: 5px 0; }
.t { flex: 39 1 0; min-width: 0; height: 20px; border-radius: 3px; }
.t svg { flex: none; width: 13px; height: 13px; }
.t svg.ic-s { width: 10px; height: 10px; }
.t svg.wide { width: 17px; }
.big-t { font: bold 17px/18px "Liberation Serif", serif; color: #3a3c3a; }
.c { flex: 18 1 0; min-width: 0; height: 18px; }
.c::before, .dd::before { content: ""; border: 3px solid transparent; border-top-color: #111; border-bottom: 0; }
.c::before { border-width: 3px 2px 0; }
.c.dim::before { border-top-color: #aaa; }
.s { flex: 12 1 0; height: 12px; background: linear-gradient(#bbb, #bbb) center / 1px 100% no-repeat; }
.on { border: 1px solid #777; background: linear-gradient(#d4d4d4, #e6e6e6); box-shadow: inset 0 0 1px #777; }
.hot { border: 1px solid #b4b4b4; background: #f6f6f6; }
.combo { flex: none; display: flex; height: 19px; border: 1px solid #b4b8c0; background: #fff; }
.combo select, .combo input { flex: 1; min-width: 0; appearance: none; padding-left: 3px; outline: 0; }
.combo input::placeholder { color: #999; opacity: 1; }
.dd { flex: none; display: flex; align-items: center; justify-content: center; width: 14px; border: 1px solid #999; background: linear-gradient(#f6f6f6, #d2d2d2); }
.tb-fmt .font { width: 96px; }
.tb-fmt .size { width: 36px; margin: 0 6px; }

/* work area */
.work { flex: 1; display: grid; grid-template-columns: 162px 5px minmax(0, 1fr) 4px 215px; min-height: 0; }
.panel-head { display: flex; align-items: center; justify-content: space-between; height: 24px; padding: 0 4px 0 3px; }
.slides { display: flex; flex-direction: column; }
.thumbs { flex: 1; display: flex; flex-direction: column; gap: 9px; margin: 0 0 1px 2px; padding: 5px 10px 0 7px; border-top: 1px solid #aaa; background: #fff; }
.thumbs li { display: flex; gap: 4px; justify-content: flex-end; padding: 3px 2px; border: 1px solid transparent; color: #555; font-size: 10px; line-height: 10px; }
.thumbs div { width: 121px; height: 91px; border: 1px solid #888; border-radius: 1px; background: #fff; box-shadow: 0 1px 1px #777; }
.thumbs .sel { border-color: #5a87b8; background: linear-gradient(#8eb0d4, #a3c2e4); }
.split { display: flex; align-items: center; justify-content: center; border: solid #b0b2b0; border-width: 0 1px; background: #f4f4f4; }
.split i { width: 2px; height: 24px; background: radial-gradient(circle, #666 0 1px, transparent 1px) 0 0 / 2px 3px; }
.editor { display: grid; grid-template: 22px minmax(0, 1fr) 13px / minmax(0, 1fr) 13px; }
.tabs { grid-column: 1 / 3; display: flex; align-items: flex-end; height: 20px; padding-left: 5px; }
.tabs button { height: 16px; padding: 0 1px; border: 1px solid #a4a6a8; border-left: 0; border-bottom: 0; background: #e9e9e9; }
.tabs .cur { height: 18px; padding: 0 3px; border-color: #ccc; background: #fff; }
.canvas { display: flex; padding: 27px 9px 28px 7px; background: #cdcfcf; }
.slide { flex: 1; min-width: 0; background: #fff; box-shadow: 1px 1px 4px #555; }
.title { height: 67px; margin: -3px 14px 0 10px; padding: 4px; border: 2px solid #e2007a; background: #cbdff3; }
.title p { display: flex; flex-direction: column; align-items: center; height: 55px; overflow: hidden; background: #fff; color: #fff; font-size: 13px; line-height: 19px; white-space: nowrap; }
.title span { background: #000; padding: 0 1px; }
.outline { display: flex; align-items: center; justify-content: center; height: 148px; margin: 0 16px; border: 1px dashed #ccc; border-top: 0; font-size: 10px; }
.vs { display: flex; flex-direction: column; background: #f1f1f1; }
.hs { grid-column: 1 / 3; display: flex; padding-right: 13px; background: #f1f1f1; }
.v1 { flex: 58; } .v2 { flex: 57; } .h1 { flex: 111; } .h2 { flex: 110; }
.up, .down, .left, .right { flex: 0 0 14px; display: flex; align-items: center; justify-content: center; }
.up::before, .down::before, .left::before, .right::before { content: ""; border: 3px solid transparent; }
.up::before { border-bottom-color: #555; border-top: 0; }
.down::before { border-top-color: #555; border-bottom: 0; }
.left::before { border-right-color: #555; border-left: 0; }
.right::before { border-left-color: #555; border-right: 0; }
.thumb { display: flex; align-items: center; justify-content: center; border: 1px solid #999; border-radius: 2px; background: linear-gradient(90deg, #f8f8f8, #d2d2d4); }
.vs .thumb { flex: 176; } .hs .thumb { flex: 116; background: linear-gradient(#f8f8f8, #d2d2d4); }
.thumb::before { content: ""; width: 6px; height: 6px; background: repeating-linear-gradient(#666 0 1px, transparent 1px 2px); }
.hs .thumb::before { background: repeating-linear-gradient(90deg, #666 0 1px, transparent 1px 2px); }

/* sidebar */
.sidebar { display: grid; grid-template-columns: minmax(0, 1fr) 31px; }
.props { margin-bottom: 3px; border: solid #ddd; border-width: 0 1px 1px 0; padding-left: 2px; }
.props .panel-head { height: 25px; padding: 4px 14px 0 10px; }
.sec { display: flex; align-items: center; gap: 4px; height: 21px; margin-left: -2px; padding: 0 7px 0 8px; background: linear-gradient(90deg, #e2e2e2, #ededed); }
.minus { width: 7px; height: 7px; background: linear-gradient(#555, #555) center / 3px 1px no-repeat; border: 1px solid #8090a8; }
.more { width: 9px; height: 8px; margin-left: auto; border: 1px solid #6a8cc0; border-top-width: 2px; background: #fff; }
.prow { display: flex; align-items: center; height: 30px; }
.prow.fonts { gap: 5px; padding: 0 4px 0 6px; }
.prow.tools { padding: 0 4px 0 5px; }
.prow.short { height: 23px; }
.prow .t { flex: 0 0 20px; } .prow .c { flex: 0 0 8px; }
.prow .gapr { margin-right: 10px; }
.prow .font { flex: 1; min-width: 0; }
.size { width: 36px; }
.cols { display: grid; grid-template-columns: repeat(2, minmax(0, 1fr)); gap: 5px; padding: 3px 3px 0 4px; }
.cols p { padding-left: 2px; line-height: 16px; }
.col { display: flex; flex-direction: column; }
.spin { display: flex; align-items: center; gap: 3px; height: 26px; }
.spin svg { flex: none; width: 13px; height: 13px; margin-left: 2px; }
.spin input { flex: 1; min-width: 0; height: 21px; margin-right: -3px; padding-left: 2px; border: 1px solid #b4b8c0; border-right: 0; background: #fff; }
.spin span { flex: none; width: 14px; height: 21px; padding: 1px; border: 1px solid #b4b8c0; border-left: 0; background: #fff; }
.spin button { width: 100%; height: 9px; border: 1px solid #bbb; background: #f0f0f0; }
.spin button::before { content: ""; border: 2px solid transparent; border-bottom: 3px solid #5668a4; border-top: 0; }
.spin .dn::before { border-bottom: 0; border-top: 3px solid #5668a4; }
.sidetabs { display: flex; flex-direction: column; align-items: center; gap: 3px; padding-top: 6px; }
.sidetabs button { width: 25px; height: 25px; border-radius: 3px; }
.sidetabs svg { width: 18px; height: 18px; }
.sidetabs .menu, .sidetabs .menu svg { height: 9px; width: 9px; }
.sidetabs .menu { margin: 4px 0 12px; }

/* find bar and status bar */
.findbar { display: flex; align-items: center; height: 23px; padding-left: 3px; }
.findbar .t { flex: 0 0 20px; }
.gray { color: #888; }
.search { width: 195px; margin-right: 1px; }
.txt { margin: 0 6px 0 3px; }
.check { display: flex; align-items: center; gap: 4px; margin-right: 8px; }
.check input { appearance: none; width: 11px; height: 11px; border: 1px solid #999; background: #f6f6f6; box-shadow: inset 0 0 0 1px #fff, inset 0 0 3px 2px #ccc; }
.status { display: flex; align-items: center; height: 18px; border-top: 1px solid #b0b2b0; white-space: nowrap; }
.status span { display: flex; align-items: center; height: 12px; border-right: 1px solid #aaa; }
.status svg { width: 12px; height: 10px; margin-right: 4px; }
.status .st-a { flex: 0 0 174px; padding-left: 4px; }
.status .st-b { flex: 0 0 164px; padding-left: 8px; border: 0; }
.status .st-c { flex: 1; padding-left: 2px; }
.status .st-d { flex: 0 0 17px; padding-left: 4px; }
.status .st-e { flex: 0 0 23px; }
.status .st-f { flex: 0 0 50px; padding-left: 6px; }
.status .st-g { flex: 0 0 40px; padding-left: 4px; }
.status .st-h { flex: 0 0 17px; padding-left: 3px; }
.status .st-i { flex: 0 0 112px; gap: 4px; padding-left: 6px; color: #888; font-size: 12px; }
.status .st-j { flex: 0 0 8px; padding-left: 2px; border: 0; }
.st-i input { appearance: none; width: 76px; height: 9px; background: linear-gradient(#999, #999) 50% 50% / 1px 8px no-repeat, linear-gradient(#999, #999) 0 50% / 100% 1px no-repeat; }
.st-i input::-webkit-slider-thumb { appearance: none; width: 8px; height: 8px; border: 1px solid #666; border-radius: 50%; background: #fff; }

/* annotations over the window */
.ring { position: absolute; left: 425px; top: 34px; width: 130px; height: 130px; border: 4px solid #e2007a; border-radius: 50%; pointer-events: none; box-shadow: 1px 2px 6px rgba(0, 0, 0, .2); }
.tip { position: absolute; left: 443px; top: 101px; height: 17px; padding: 0 2px; border: 1px solid #000; background: #fdfae3; box-shadow: 2px 2px 2px #888; white-space: nowrap; }

/* magnifier */
.zoomed { position: relative; flex: none; width: 524px; }
.lens { display: block; width: 524px; height: 522px; margin: -1px 0; border-radius: 50%; box-shadow: 10px 12px 18px rgba(50, 70, 85, .65); }
.l-text { font: 54px "Open Sans", sans-serif; }
.l-tip { font: 37px "Open Sans", sans-serif; fill: #111; }
.arrow { position: absolute; left: -280px; top: 49px; width: 370px; height: 110px; overflow: visible; }
.arrow-shape { filter: drop-shadow(5px 9px 7px rgba(0, 0, 0, .55)); }
```
